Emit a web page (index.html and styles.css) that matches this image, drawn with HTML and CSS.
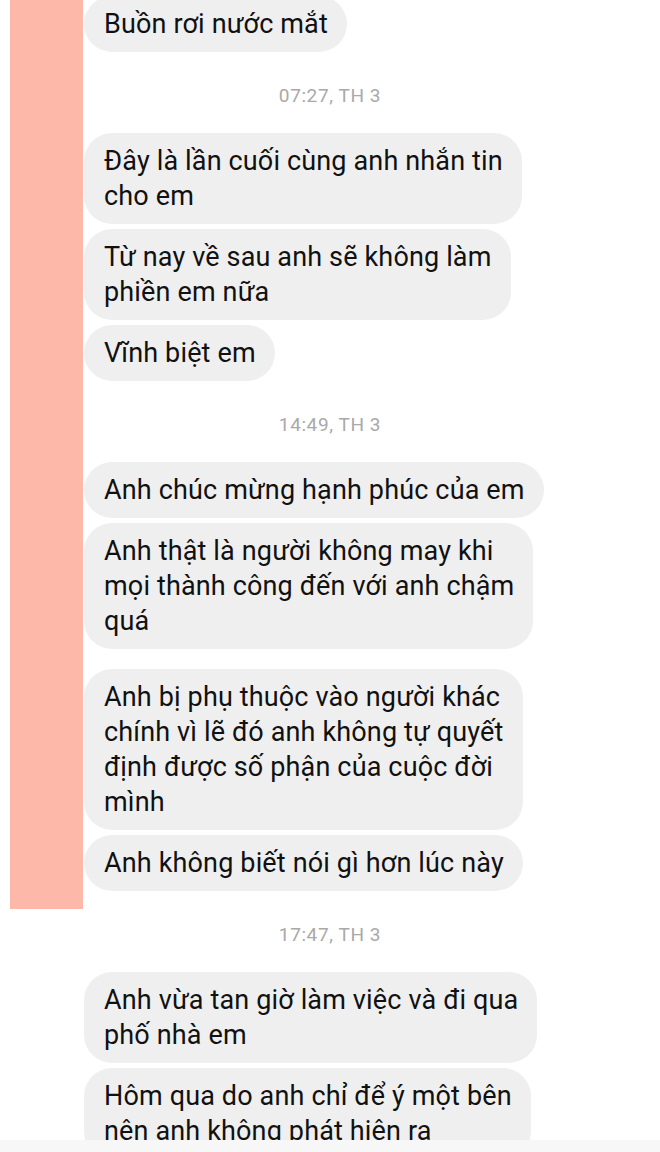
FILE: index.html
```html
<!DOCTYPE html>
<html>
  <head>
    <meta charset="utf-8">
    <title>Tin nhắn</title>
    <link rel="stylesheet" href="styles.css">
  </head>
  <body>
    <div class="screen">
      <div class="redact"></div>

      <div class="thread">
        <div class="msg">Buồn rơi nước mắt</div>

        <p class="stamp">07:27, TH 3</p>

        <div class="msg">Đây là lần cuối cùng anh nhắn tin<br>cho em</div>
        <div class="msg">Từ nay về sau anh sẽ không làm<br>phiền em nữa</div>
        <div class="msg">Vĩnh biệt em</div>

        <p class="stamp">14:49, TH 3</p>

        <div class="msg">Anh chúc mừng hạnh phúc của em</div>
        <div class="msg spaced">Anh thật là người không may khi<br>mọi thành công đến với anh chậm<br>quá</div>
        <div class="msg">Anh bị phụ thuộc vào người khác<br>chính vì lẽ đó anh không tự quyết<br>định được số phận của cuộc đời<br>mình</div>
        <div class="msg">Anh không biết nói gì hơn lúc này</div>

        <p class="stamp">17:47, TH 3</p>

        <div class="msg">Anh vừa tan giờ làm việc và đi qua<br>phố nhà em</div>
        <div class="msg">Hôm qua do anh chỉ để ý một bên<br>nên anh không phát hiện ra</div>
      </div>

      <div class="composer"></div>
    </div>
  </body>
</html>
```

FILE: styles.css
```css
body {
  margin: 0;
  background: #ffffff;
  font-family: Roboto, "Noto Sans", sans-serif;
}

.screen {
  position: relative;
  width: 660px;
  height: 1152px;
  display: flex;
  flex-direction: column;
  overflow: hidden;
}

/* pink block painted over the avatars */
.redact {
  position: absolute;
  left: 10px;
  top: 0;
  width: 73px;
  height: 909px;
  background: #fdb8aa;
  z-index: 2;
}

.thread {
  flex: 1;
  overflow: hidden;
  margin-top: -4px;
}

.msg {
  width: fit-content;
  margin: 0 0 5px 84px;
  padding: 10.5px 19px 10.5px 20px;
  background: #efeff0;
  border-radius: 28px;
  font-size: 27px;
  line-height: 35px;
  letter-spacing: 0.15px;
  color: #111111;
}

.msg.spaced {
  margin-bottom: 20px;
}

.stamp {
  margin: 0;
  padding: 29px 0 27px;
  text-align: center;
  font-size: 19px;
  line-height: 20px;
  letter-spacing: 0.6px;
  color: #a9a9a9;
}

.composer {
  height: 12px;
  background: #f7f7f7;
}
```
